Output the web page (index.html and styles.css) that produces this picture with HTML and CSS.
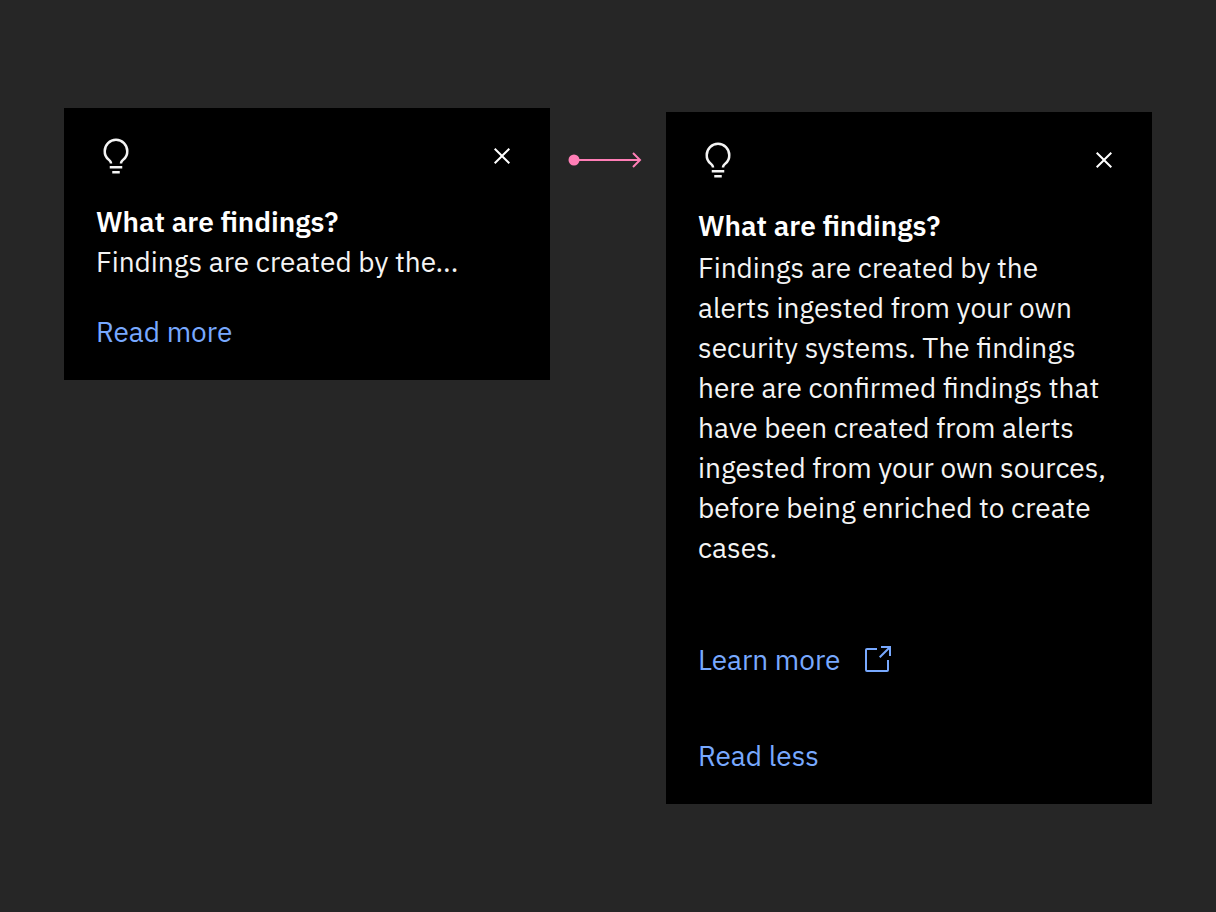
FILE: index.html
```html
<!DOCTYPE html>
<html lang="en">
<head>
<meta charset="utf-8">
<meta name="viewport" content="width=device-width, initial-scale=1">
<title>What are findings?</title>
<link rel="stylesheet" href="styles.css">
</head>
<body>
<main class="canvas">
  <section class="card" aria-labelledby="title-collapsed">
    <header class="card-header">
      <svg class="icon-idea" viewBox="0 0 32 32" aria-hidden="true"><path d="M11 24h10v2H11zM13 28h6v2h-6zM16 2A10 10 0 0 0 6 12a9.19 9.19 0 0 0 3.46 7.62c1 .93 1.54 1.46 1.54 2.38h2c0-1.84-1.11-2.87-2.19-3.86A7.2 7.2 0 0 1 8 12a8 8 0 0 1 16 0 7.2 7.2 0 0 1-2.82 6.14c-1.07 1-2.18 2-2.18 3.86h2c0-.93.59-1.47 1.54-2.38A9.19 9.19 0 0 0 26 12 10 10 0 0 0 16 2z"/></svg>
      <button class="close" type="button" aria-label="Close"><svg class="icon" viewBox="0 0 32 32" aria-hidden="true"><path d="M24 9.4 22.6 8 16 14.6 9.4 8 8 9.4l6.6 6.6L8 22.6 9.4 24l6.6-6.6 6.6 6.6 1.4-1.4-6.6-6.6z"/></svg></button>
    </header>
    <h2 class="title" id="title-collapsed">What are findings?</h2>
    <p class="text">Findings are created by the...</p>
    <button class="action toggle-more" type="button">Read more</button>
  </section>

  <div class="connector">
    <svg class="arrow" viewBox="0 0 76 16" aria-hidden="true">
      <circle cx="6" cy="8" r="5.5" fill="#ff7eb6"/>
      <path d="M6 8h66M65 1l7 7-7 7" fill="none" stroke="#ff7eb6" stroke-width="2"/>
    </svg>
  </div>

  <section class="card card-expanded" aria-labelledby="title-expanded">
    <header class="card-header">
      <svg class="icon-idea" viewBox="0 0 32 32" aria-hidden="true"><path d="M11 24h10v2H11zM13 28h6v2h-6zM16 2A10 10 0 0 0 6 12a9.19 9.19 0 0 0 3.46 7.62c1 .93 1.54 1.46 1.54 2.38h2c0-1.84-1.11-2.87-2.19-3.86A7.2 7.2 0 0 1 8 12a8 8 0 0 1 16 0 7.2 7.2 0 0 1-2.82 6.14c-1.07 1-2.18 2-2.18 3.86h2c0-.93.59-1.47 1.54-2.38A9.19 9.19 0 0 0 26 12 10 10 0 0 0 16 2z"/></svg>
      <button class="close" type="button" aria-label="Close"><svg class="icon" viewBox="0 0 32 32" aria-hidden="true"><path d="M24 9.4 22.6 8 16 14.6 9.4 8 8 9.4l6.6 6.6L8 22.6 9.4 24l6.6-6.6 6.6 6.6 1.4-1.4-6.6-6.6z"/></svg></button>
    </header>
    <h2 class="title" id="title-expanded">What are findings?</h2>
    <p class="text">Findings are created by the alerts ingested from your own security systems. The findings here are confirmed findings that have been created from alerts ingested from your own sources, before being enriched to create cases.</p>
    <a class="action learn-more" href="#learn-more">Learn more
      <svg class="icon" viewBox="0 0 32 32" aria-hidden="true"><path d="M26 28H6a2 2 0 0 1-2-2V6a2 2 0 0 1 2-2h10v2H6v20h20V16h2v10a2 2 0 0 1-2 2z"/><path d="M20 2v2h6.586L18 12.586 19.414 14 28 5.414V12h2V2z"/></svg>
    </a>
    <button class="action toggle-less" type="button">Read less</button>
  </section>
</main>
</body>
</html>
```
FILE: styles.css
```css
* {
  box-sizing: border-box;
}

body {
  margin: 0;
  background: #262626;
  color: #f4f4f4;
  font-family: "IBM Plex Sans", "Noto Sans", sans-serif;
  font-size: 28px;
  line-height: 40px;
}

.canvas {
  display: grid;
  grid-template-columns: 1fr 116px 1fr;
  align-items: start;
  min-height: 100vh;
  padding: 108px 64px;
}

.card {
  display: flex;
  flex-direction: column;
  align-items: flex-start;
  padding: 28px 32px;
  background: #000;
}

.card-expanded {
  margin-top: 4px;
}

.card-header {
  display: flex;
  align-items: center;
  justify-content: space-between;
  align-self: stretch;
  margin-bottom: 26px;
}

.icon-idea {
  width: 40px;
  height: 40px;
  fill: #f4f4f4;
}

.icon {
  display: block;
  width: 32px;
  height: 32px;
  fill: currentColor;
}

.close {
  padding: 0;
  border: 0;
  background: none;
  color: #fff;
  cursor: pointer;
}

.title {
  margin: 0;
  color: #fff;
  font-size: 28px;
  font-weight: 600;
  line-height: 40px;
}

.text {
  margin: 0;
  padding-right: 8px;
}

.card-expanded .text {
  margin-top: 2px;
}

.action {
  padding: 0;
  border: 0;
  background: none;
  color: #78a9ff;
  font: inherit;
  text-decoration: none;
  cursor: pointer;
}

.toggle-more {
  margin-top: 30px;
}

.learn-more {
  display: flex;
  align-items: center;
  gap: 20px;
  margin-top: 72px;
}

.toggle-less {
  margin-top: 56px;
}

.connector {
  padding: 44px 18px 0;
}

.arrow {
  display: block;
  width: 76px;
  height: 16px;
}
```
